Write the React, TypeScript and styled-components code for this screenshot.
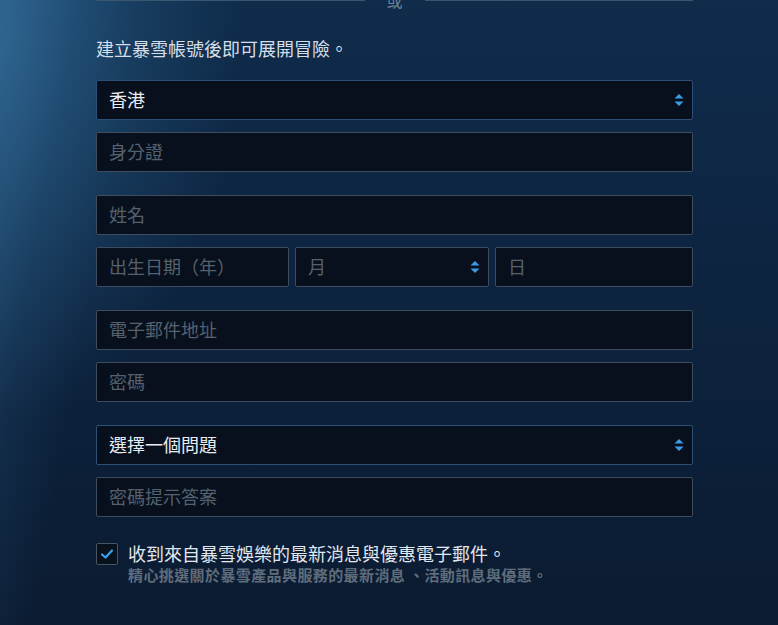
import styled, { createGlobalStyle } from "styled-components";

const GlobalStyle = createGlobalStyle`
  html, body {
    margin: 0;
    padding: 0;
    height: 100%;
  }
  body {
    overflow: hidden;
    font-family: "Noto Sans CJK TC", "Noto Sans", sans-serif;
    background:
      linear-gradient(100deg, rgba(70, 140, 190, 0.35) 0%, rgba(50, 110, 160, 0.15) 9%, rgba(40, 100, 150, 0) 16%),
      radial-gradient(ellipse 240px 380px at 0px 40px, rgba(60, 130, 180, 0.45), rgba(40, 100, 150, 0) 100%),
      linear-gradient(180deg, #0f2c4b 0%, #0d2440 45%, #0b1b31 100%);
    background-color: #0c1f36;
  }
`;

const Page = styled.div`
  width: 597px;
  margin-left: 96px;
  height: 625px;
  display: flex;
  flex-direction: column;
`;

const OrRow = styled.div`
  margin-top: -10px;
  height: 20px;
  display: flex;
  align-items: center;
  gap: 22px;
  color: #6f8297;
  font-size: 16px;
  line-height: 20px;
`;

const OrLine = styled.div`
  flex: 1;
  height: 1px;
  background: #3a5670;
`;

const Intro = styled.p`
  margin: 26px 0 20px;
  font-size: 18px;
  line-height: 24px;
  color: #d6dee8;
`;

const Group = styled.div`
  display: flex;
  flex-direction: column;
  gap: 12px;
  margin-bottom: 23px;
`;

const Field = styled.div<{ $select?: boolean; $filled?: boolean }>`
  position: relative;
  height: 40px;
  box-sizing: border-box;
  display: flex;
  align-items: center;
  padding: 0 12px 2px;
  background: #07101c;
  border: 1px solid ${({ $select }) => ($select ? "#2c4f78" : "#3d4c5e")};
  border-radius: 2px;
  font-size: 18px;
  color: ${({ $filled }) => ($filled ? "#e8edf3" : "#56616f")};
`;

const DateRow = styled.div`
  display: grid;
  grid-template-columns: 193px 194px 1fr;
  gap: 6px;
`;

const Arrows = styled.svg`
  position: absolute;
  right: 8px;
  top: 50%;
  margin-top: -6px;
`;

const Consent = styled.div`
  display: flex;
  gap: 10px;
  margin-top: 2px;
`;

const Box = styled.div`
  flex: none;
  width: 22px;
  height: 22px;
  box-sizing: border-box;
  border: 1px solid #4a5563;
  background: #08121d;
  border-radius: 2px;
  display: flex;
  align-items: center;
  justify-content: center;
  margin-top: 1px;
`;

const ConsentText = styled.div`
  display: flex;
  flex-direction: column;
`;

const Main = styled.span`
  font-size: 18px;
  line-height: 22px;
  color: #e1e7ee;
`;

const Sub = styled.span`
  font-size: 15px;
  line-height: 22px;
  font-weight: 700;
  letter-spacing: 0.4px;
  color: #5f6c7b;
`;

const SelectArrows = () => (
  <Arrows width="10" height="12" viewBox="0 0 10 12">
    <path d="M5 0 L9.5 4.5 H0.5 Z" fill="#3a9be6" />
    <path d="M5 12 L9.5 7.5 H0.5 Z" fill="#3a9be6" />
  </Arrows>
);

export default function App() {
  return (
    <>
      <GlobalStyle />
      <Page>
        <OrRow>
          <OrLine />
          <span>或</span>
          <OrLine />
        </OrRow>
        <Intro>建立暴雪帳號後即可展開冒險。</Intro>

        <Group>
          <Field $select $filled>
            香港
            <SelectArrows />
          </Field>
          <Field>身分證</Field>
        </Group>

        <Group>
          <Field>姓名</Field>
          <DateRow>
            <Field>出生日期（年）</Field>
            <Field>
              月
              <SelectArrows />
            </Field>
            <Field>日</Field>
          </DateRow>
        </Group>

        <Group>
          <Field>電子郵件地址</Field>
          <Field>密碼</Field>
        </Group>

        <Group>
          <Field $select $filled>
            選擇一個問題
            <SelectArrows />
          </Field>
          <Field>密碼提示答案</Field>
        </Group>

        <Consent>
          <Box>
            <svg width="14" height="12" viewBox="0 0 14 12">
              <path
                d="M2 6.5 L5.5 9.5 L12 2.5"
                fill="none"
                stroke="#3aa2ea"
                strokeWidth="2.2"
                strokeLinecap="round"
                strokeLinejoin="round"
              />
            </svg>
          </Box>
          <ConsentText>
            <Main>收到來自暴雪娛樂的最新消息與優惠電子郵件。</Main>
            <Sub>精心挑選關於暴雪產品與服務的最新消息 、活動訊息與優惠。</Sub>
          </ConsentText>
        </Consent>
      </Page>
    </>
  );
}
